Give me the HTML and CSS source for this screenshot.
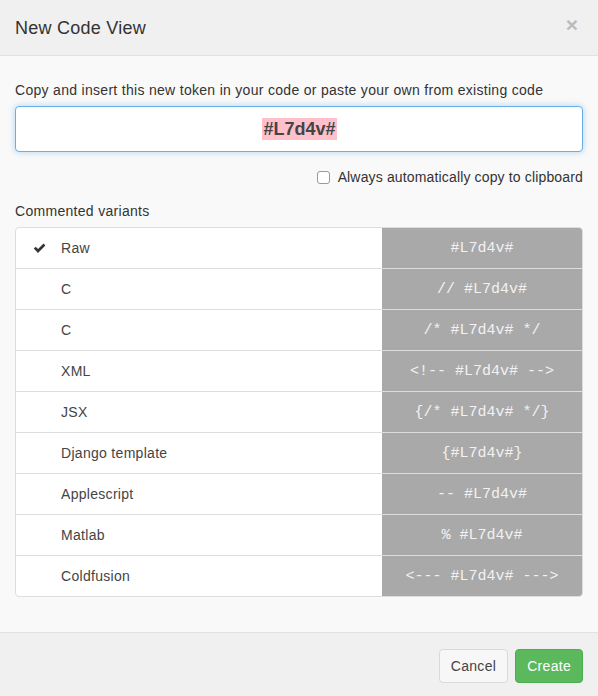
FILE: index.html
```html
<!DOCTYPE html>
<html>
<head>
<meta charset="utf-8">
<link rel="stylesheet" href="styles.css">
</head>
<body>
<div class="modal">
  <div class="modal-header">
    <h1 class="title">New Code View</h1>
    <span class="close">×</span>
  </div>
  <div class="modal-body">
    <div class="label">Copy and insert this new token in your code or paste your own from existing code</div>
    <div class="token-input"><span class="token">#L7d4v#</span></div>
    <label class="check-row"><span class="checkbox"></span>Always automatically copy to clipboard</label>
    <div class="label section">Commented variants</div>
    <div class="variants">
      <div class="row"><div class="name"><span class="tick"><svg width="13" height="11" viewBox="0 0 13 11"><path d="M0.8 5.6 L2.7 3.8 L5 6.1 L10.5 0.6 L12.4 2.5 L5 9.9 Z" fill="#333"/></svg></span>Raw</div><div class="code">#L7d4v#</div></div>
      <div class="row"><div class="name"><span class="tick"></span>C</div><div class="code">// #L7d4v#</div></div>
      <div class="row"><div class="name"><span class="tick"></span>C</div><div class="code">/* #L7d4v# */</div></div>
      <div class="row"><div class="name"><span class="tick"></span>XML</div><div class="code">&lt;!-- #L7d4v# --&gt;</div></div>
      <div class="row"><div class="name"><span class="tick"></span>JSX</div><div class="code">{/* #L7d4v# */}</div></div>
      <div class="row"><div class="name"><span class="tick"></span>Django template</div><div class="code">{#L7d4v#}</div></div>
      <div class="row"><div class="name"><span class="tick"></span>Applescript</div><div class="code">-- #L7d4v#</div></div>
      <div class="row"><div class="name"><span class="tick"></span>Matlab</div><div class="code">% #L7d4v#</div></div>
      <div class="row"><div class="name"><span class="tick"></span>Coldfusion</div><div class="code">&lt;--- #L7d4v# ---&gt;</div></div>
    </div>
  </div>
  <div class="modal-footer">
    <button class="btn btn-default">Cancel</button>
    <button class="btn btn-success">Create</button>
  </div>
</div>
</body>
</html>
```
FILE: styles.css
```css
html, body {
  margin: 0;
  padding: 0;
}
body {
  font-family: "Liberation Sans", Arial, sans-serif;
  font-size: 14px;
  letter-spacing: 0.3px;
  color: #333;
  background: #f9f9f9;
}
.modal {
  width: 598px;
  height: 696px;
  display: flex;
  flex-direction: column;
  background: #f9f9f9;
}
.modal-header {
  height: 55px;
  background: #f0f0f0;
  border-bottom: 1px solid #e2e2e2;
  display: flex;
  align-items: center;
  justify-content: space-between;
  padding: 0 15px;
}
.title {
  margin: 0;
  font-size: 18px;
  font-weight: normal;
  letter-spacing: 0.25px;
  color: #333;
  line-height: 20px;
  padding-top: 1px;
}
.close {
  font-size: 21px;
  font-weight: bold;
  color: #bbb;
  line-height: 20px;
  margin-right: 5px;
  margin-bottom: 5px;
  letter-spacing: 0;
}
.modal-body {
  flex: 1;
  padding: 24px 15px 0;
}
.label {
  line-height: 20px;
  margin-bottom: 6px;
}
.label.section {
  margin-top: 14px;
}
.token-input {
  height: 44px;
  border: 1px solid #66afe9;
  border-radius: 4px;
  background: #fff;
  box-shadow: 0 0 6px rgba(102, 175, 233, 0.5);
  display: flex;
  align-items: center;
  justify-content: center;
}
.token {
  background: #ffc0cb;
  font-weight: bold;
  font-size: 18px;
  letter-spacing: 0;
  line-height: 22px;
  color: #444;
  padding: 0 1px;
  margin-left: 1px;
}
.check-row {
  display: flex;
  justify-content: flex-end;
  align-items: center;
  margin-top: 15px;
  line-height: 20px;
  letter-spacing: 0.15px;
}
.checkbox {
  width: 11px;
  height: 11px;
  border: 1px solid #999;
  border-radius: 3px;
  background: #fff;
  margin-right: 8px;
}
.variants {
  border: 1px solid #ddd;
  border-radius: 4px;
  overflow: hidden;
  background: #fff;
}
.row {
  display: grid;
  grid-template-columns: 366px 1fr;
  height: 40px;
  border-top: 1px solid #ddd;
}
.row:first-child {
  border-top: none;
}
.name {
  display: flex;
  align-items: center;
  color: #444;
}
.tick {
  width: 45px;
  padding-left: 17px;
  box-sizing: border-box;
  display: flex;
  align-items: center;
}
.code {
  background: #a9a9a9;
  color: #f2f2f2;
  font-family: "Liberation Mono", "Courier New", monospace;
  font-size: 15px;
  letter-spacing: 0;
  display: flex;
  align-items: center;
  justify-content: center;
  white-space: pre;
}
.modal-footer {
  height: 64px;
  box-sizing: border-box;
  border-top: 1px solid #e2e2e2;
  background: #f0f0f0;
  display: flex;
  justify-content: flex-end;
  align-items: center;
  padding: 0 15px;
  gap: 7px;
}
.btn {
  font-family: "Liberation Sans", Arial, sans-serif;
  font-size: 14px;
  letter-spacing: 0.3px;
  height: 34px;
  padding: 0 11px;
  border-radius: 4px;
  border: 1px solid #ccc;
  margin-top: 2px;
}
.btn-default {
  background: #f7f7f7;
  color: #444;
  border-color: #d9d9d9;
}
.btn-success {
  background: #5cb85c;
  border-color: #4cae4c;
  color: #fff;
}
```
